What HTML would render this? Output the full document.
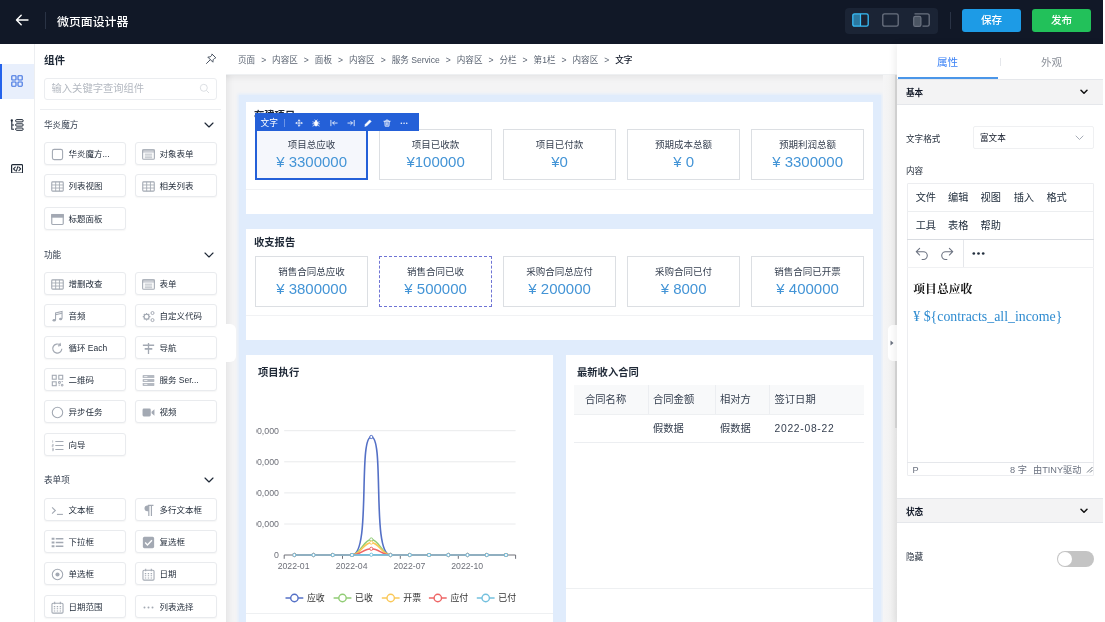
<!DOCTYPE html>
<html lang="zh-CN">
<head>
<meta charset="utf-8">
<title>微页面设计器</title>
<style>
*{box-sizing:border-box;margin:0;padding:0}
html,body{width:1105px;height:622px;overflow:hidden;background:#fff}
body{will-change:transform}
body{font-family:"Liberation Sans","Noto Sans CJK SC",sans-serif;color:#1f2937;position:relative;font-size:9.2px}
.abs{position:absolute}
/* header */
#hdr{left:0;top:0;width:1103px;height:43.5px;background:#111827}
#hdr .title{left:57px;top:1.5px;height:41px;line-height:41px;color:#fff;font-size:11.9px;font-weight:500;letter-spacing:0}
#hdr .vdiv{left:45px;top:12px;width:1px;height:17px;background:#2a3345}
.btn{top:8.5px;height:23.5px;width:59px;border-radius:3px;color:#fff;font-size:10.6px;font-weight:500;text-align:center;line-height:22.5px}
#save{left:962px;background:#1d9be6}
#pub{left:1032px;background:#22c15a}
#vgrp{left:845.2px;top:7.5px;width:93px;height:26.200px;border-radius:4px;background:#1b2435}
#hdiv2{left:949.5px;top:11.5px;width:1px;height:17.5px;background:#2a3345}
/* left bar */
#lbar{left:0;top:43.5px;width:35px;height:579px;background:#fff;border-right:1px solid #eceef1}
#lact{left:0;top:64px;width:34px;height:35px;background:#e8effc;border-left:2px solid #2563eb}
/* component panel */
#cpanel{left:35px;top:43.5px;width:191px;height:579px;background:#fff}
.ptitle{left:44px;top:52px;font-size:10.6px;font-weight:700;color:#1f2937;line-height:16px}
#search{left:44px;top:78px;width:173px;height:21.5px;border:1px solid #ebedf0;border-radius:3px;color:#b4b9c1;font-size:10.3px;line-height:19.5px;padding-left:6.5px}
.hline{height:1px;background:#eceef1}
.sec{left:44px;font-size:8.6px;color:#374151;line-height:12px}
.chev{left:204px;width:10px;height:6px}
.item{width:82px;height:23px;border:1px solid #e9ebee;border-radius:3px;background:#fff;font-size:8.5px;line-height:22.3px;color:#1f2937;padding-left:23.5px;white-space:nowrap;overflow:hidden;box-shadow:0 1px 1.5px rgba(0,0,0,.04)}
.item svg{position:absolute;left:5.5px;top:4.5px;width:13px;height:13px}
.c1{left:44px}.c2{left:135px}
/* canvas */
#bread{left:226px;top:43.5px;width:671px;height:31px;background:#fff;border-bottom:1px solid #eef0f2}
#bread .t{left:12px;top:0;line-height:32px;font-size:8.6px;color:#5b6472;white-space:nowrap}
#bread i{font-style:normal;margin:0 5.95px}
#bread b{color:#111827;font-weight:500}
#canvas{left:226px;top:74.5px;width:671px;height:548px;background:#f4f4f5;box-shadow:inset 0 7px 7px -5px rgba(0,0,0,.07),inset 7px 0 7px -5px rgba(0,0,0,.07)}
#blue{left:238.5px;top:95px;width:642.5px;height:540px;background:#e0ecfc;box-shadow:0 0 3px 1px #e0ecfc}
.card{background:#fff}
.ctitle{font-size:10.3px;font-weight:700;color:#1f2937;line-height:14px;white-space:nowrap}
.stat{width:112.6px;height:51px;border:1px solid #dcdfe3;background:#fff;text-align:center}
.stat .l{font-size:9.5px;color:#374151;line-height:13px;margin-top:7.5px}
.stat .v{font-size:15px;color:#4394d6;line-height:17px;margin-top:2.5px;white-space:pre}
.stat.sel{border:2px solid #2460d8;background:#f5f7fc}
.stat.sel .l{margin-top:6.5px}
.stat.dash{border:1px dashed #6f74d4}
.th{font-size:10.300px;color:#374151;line-height:14px;white-space:nowrap}
.td{font-size:10.300px;color:#374151;line-height:14px;white-space:nowrap}
/* right panel */
#rpanel{left:896.5px;top:43.5px;width:208.5px;height:579px;background:#fff;box-shadow:-2px 0 7px rgba(0,0,0,.07)}
#sbar{left:883px;top:75px;width:14px;height:547px;background:linear-gradient(to right,#f5f5f6 0%,#f2f2f2 55%,#ededed 100%)}
#sthumb{left:894.500px;top:75px;width:2px;height:353px;background:#d9d9d9}
.rsec{left:896.5px;width:208.5px;height:25.5px;background:#f3f3f4;border-top:1px solid #e5e7eb;border-bottom:1px solid #e5e7eb}
.rsec span{position:absolute;left:9.5px;top:0;line-height:26px;font-size:8.6px;font-weight:700;color:#111827}
.rlabel{left:906px;font-size:8.6px;color:#1f2937;line-height:12px}
.menu{font-size:10.2px;color:#222f3e;line-height:14px}
</style>
</head>
<body>
<!-- HEADER -->
<div id="hdr" class="abs">
  <svg class="abs" style="left:15px;top:14px" width="14" height="12" viewBox="0 0 14 12"><path d="M6.2 1.2 1.5 6l4.7 4.8M1.7 6H13" fill="none" stroke="#fff" stroke-width="1.4" stroke-linecap="round" stroke-linejoin="round"/></svg>
  <div class="abs vdiv"></div>
  <div class="abs title">微页面设计器</div>
  <div id="vgrp" class="abs">
    <svg class="abs" style="left:7px;top:5.8px" width="17" height="14" viewBox="0 0 17 14"><rect x="1" y="1" width="7.500" height="12" fill="#38bdf8" fill-opacity=".55"/><rect x=".8" y=".8" width="15.400" height="12.400" rx="1.800" fill="none" stroke="#38bdf8" stroke-width="1.300"/><path d="M8.500 1v12" stroke="#38bdf8" stroke-width="1.200"/></svg>
    <svg class="abs" style="left:37.300px;top:5.800px" width="17" height="14" viewBox="0 0 17 14"><rect x=".8" y=".8" width="15.400" height="12.400" rx="1.800" fill="none" stroke="#6b7280" stroke-width="1.300"/></svg>
    <svg class="abs" style="left:68px;top:5.800px" width="17" height="14" viewBox="0 0 17 14"><path d="M1.500.8h12.900a1.800 1.800 0 0 1 1.800 1.800v8.800a1.800 1.800 0 0 1-1.800 1.800H9.500" fill="none" stroke="#6b7280" stroke-width="1.300"/><rect x=".7" y="3.400" width="7.200" height="9.900" rx="1.600" fill="#4b5563" stroke="#6b7280" stroke-width="1.200"/></svg>
  </div>
  <div id="hdiv2" class="abs"></div>
  <div id="save" class="abs btn">保存</div>
  <div id="pub" class="abs btn">发布</div>
</div>

<!-- LEFT BAR -->
<div id="lbar" class="abs"></div>
<div id="lact" class="abs"></div>
<svg class="abs" style="left:11px;top:75px" width="12" height="12" viewBox="0 0 12 12" fill="none" stroke="#3b6fe0" stroke-width="1.1"><rect x=".8" y=".8" width="4.2" height="4.2" rx=".6"/><rect x="7" y=".8" width="4.2" height="4.2" rx=".6"/><rect x=".8" y="7" width="4.2" height="4.2" rx=".6"/><rect x="7" y="7" width="4.2" height="4.2" rx=".6"/></svg>
<svg class="abs" style="left:10px;top:119px" width="14" height="12" viewBox="0 0 14 12" fill="none" stroke="#1f2937" stroke-width="1"><circle cx="1.800" cy="1.500" r="1.150" fill="#1f2937" stroke="none"/><path d="M1.800 2v8.300h2.200M1.800 6h2.200" stroke-width="1.100"/><rect x="5.600" y=".6" width="7.600" height="2.300" rx="1.150"/><rect x="5.600" y="4.800" width="7.600" height="2.300" rx="1.150"/><rect x="5.600" y="9" width="7.600" height="2.300" rx="1.150"/></svg>
<svg class="abs" style="left:10.800px;top:163.700px" width="12.200" height="9.800" viewBox="0 0 12.200 9.800" fill="none" stroke="#1f2937" stroke-width="1.200" stroke-linejoin="round" stroke-linecap="round"><rect x=".6" y=".6" width="11" height="8.600" rx="1"/><path d="M4.300 3.100 2.500 4.900l1.800 1.800M7.900 3.100 9.700 4.900 7.900 6.700M6.800 2.700 5.400 7.100" stroke-width="1.050"/></svg>

<!-- COMPONENT PANEL -->
<div id="cpanel" class="abs"></div>
<div class="abs ptitle">组件</div>
<svg class="abs" style="left:205px;top:53px" width="12" height="12" viewBox="0 0 12 12" fill="none" stroke="#4b5563" stroke-width="1" stroke-linejoin="round" stroke-linecap="round"><path d="M7.200 1.200 10.800 4.800 9.600 5.300 8.100 6.800 7.900 9.200 2.800 4.100 5.200 3.900 6.700 2.400ZM5.200 6.800 1.500 10.500"/></svg>
<div id="search" class="abs">输入关键字查询组件</div>
<svg class="abs" style="left:199px;top:83px" width="11" height="11" viewBox="0 0 11 11" fill="none" stroke="#d8dbe0" stroke-width=".9"><circle cx="4.800" cy="4.800" r="3.500"/><path d="M7.500 7.500 10 10"/></svg>
<div class="abs hline" style="left:40px;top:109px;width:181px"></div>

<div class="abs sec" style="top:119px">华炎魔方</div>
<svg class="abs chev" style="top:122px" viewBox="0 0 10 6"><path d="M1 1l4 4 4-4" fill="none" stroke="#1f2937" stroke-width="1.150" stroke-linecap="round" stroke-linejoin="round"/></svg>
<div class="abs item c1" style="top:142px"><svg viewBox="0 0 12 12" fill="none" stroke="#a3a9b3" stroke-width="1" ><rect x="1.3" y="1.3" width="9.4" height="9.4" rx="1.6"/></svg>华炎魔方...</div>
<div class="abs item c2" style="top:142px"><svg viewBox="0 0 12 12" fill="none" stroke="#a3a9b3" stroke-width="1" ><rect x=".6" y="1.6" width="10.8" height="8.8" rx="1"/><rect x=".6" y="1.6" width="10.8" height="2.2" fill="#a3a9b3" opacity=".55"/><path d="M2.600 5.700h6.800M2.600 7.400h6.800M2.600 9h6.800" stroke-width=".7"/></svg>对象表单</div>
<div class="abs item c1" style="top:174px"><svg viewBox="0 0 12 12" fill="none" stroke="#a3a9b3" stroke-width="1" ><rect x=".7" y="1.700" width="10.6" height="8.600" rx=".8"/><path d="M.7 4.600h10.600M.7 7.400h10.600M4.300 1.700v8.600M7.800 1.700v8.600" stroke-width=".8"/></svg>列表视图</div>
<div class="abs item c2" style="top:174px"><svg viewBox="0 0 12 12" fill="none" stroke="#a3a9b3" stroke-width="1" ><rect x=".7" y="1.700" width="10.6" height="8.600" rx=".8"/><path d="M.7 4.600h10.600M.7 7.400h10.600M4.300 1.700v8.600M7.800 1.700v8.600" stroke-width=".8"/></svg>相关列表</div>
<div class="abs item c1" style="top:207px"><svg viewBox="0 0 12 12" fill="none" stroke="#a3a9b3" stroke-width="1" ><rect x=".7" y="1.400" width="10.600" height="9.200" rx=".8" stroke-width="1.100"/><rect x=".7" y="1.400" width="10.600" height="2.400" fill="#a3a9b3"/></svg>标题面板</div>
<div class="abs sec" style="top:248.5px">功能</div>
<svg class="abs chev" style="top:251.5px" viewBox="0 0 10 6"><path d="M1 1l4 4 4-4" fill="none" stroke="#1f2937" stroke-width="1.150" stroke-linecap="round" stroke-linejoin="round"/></svg>
<div class="abs item c1" style="top:272px"><svg viewBox="0 0 12 12" fill="none" stroke="#a3a9b3" stroke-width="1" ><rect x=".7" y="1.700" width="10.6" height="8.600" rx=".8"/><path d="M.7 4.600h10.600M.7 7.400h10.600M4.300 1.700v8.600M7.800 1.700v8.600" stroke-width=".8"/></svg>增删改查</div>
<div class="abs item c2" style="top:272px"><svg viewBox="0 0 12 12" fill="none" stroke="#a3a9b3" stroke-width="1" ><rect x=".6" y="1.6" width="10.8" height="8.8" rx="1"/><rect x=".6" y="1.6" width="10.8" height="2.2" fill="#a3a9b3" opacity=".55"/><path d="M2.600 5.700h6.800M2.600 7.400h6.800M2.600 9h6.800" stroke-width=".7"/></svg>表单</div>
<div class="abs item c1" style="top:304px"><svg viewBox="0 0 12 12" fill="none" stroke="#a3a9b3" stroke-width="1" ><path d="M4.200 9.300V2.700l6-1.300v6.700" stroke-width="1"/><path d="M4.200 4.300l6-1.300" stroke-width="1"/><ellipse cx="2.900" cy="9.500" rx="1.500" ry="1.100" fill="#a3a9b3" stroke="none"/><ellipse cx="8.900" cy="8.300" rx="1.500" ry="1.100" fill="#a3a9b3" stroke="none"/></svg>音频</div>
<div class="abs item c2" style="top:304px"><svg viewBox="0 0 12 12" fill="none" stroke="#a3a9b3" stroke-width="1" ><circle cx="4.200" cy="6.200" r="2.300" stroke-width="1.100"/><path d="M4.200 2.700v1.200M4.200 8.500v1.200M.7 6.200h1.200M6.500 6.200h1.200M1.700 3.700l.9.900M5.800 7.800l.9.900M6.700 3.700l-.9.900M2.600 7.800l-.9.900" stroke-width="1.100"/><circle cx="9.700" cy="2.800" r="1.400" stroke-width=".9"/><circle cx="9.700" cy="9.300" r="1.400" stroke-width=".9"/></svg>自定义代码</div>
<div class="abs item c1" style="top:336px"><svg viewBox="0 0 12 12" fill="none" stroke="#a3a9b3" stroke-width="1" ><path d="M10 6.200A4.200 4.200 0 1 1 8.600 2.900" stroke-width="1.100"/><path d="M8.300.8l.5 2.400-2.400.4" stroke-width="1" stroke-linejoin="round"/></svg>循环 Each</div>
<div class="abs item c2" style="top:336px"><svg viewBox="0 0 12 12" fill="none" stroke="#a3a9b3" stroke-width="1" ><path d="M6 1v10" stroke-width="1.200"/><path d="M.8 3h10.400M2.500 6.400h7" stroke-width="1.500"/></svg>导航</div>
<div class="abs item c1" style="top:368px"><svg viewBox="0 0 12 12" fill="none" stroke="#a3a9b3" stroke-width="1" ><rect x="1.200" y="1.200" width="3.600" height="3.600"/><rect x="7.200" y="1.200" width="3.600" height="3.600"/><rect x="1.200" y="7.200" width="3.600" height="3.600"/><path d="M7 7h1.600v1.600H7zM9.600 9.600h1.400v1.400H9.600zM9.800 7h1.200M7 10.300h1.200" stroke-width=".9"/></svg>二维码</div>
<div class="abs item c2" style="top:368px"><svg viewBox="0 0 12 12" fill="none" stroke="#a3a9b3" stroke-width="1" ><rect x=".6" y="1" width="10.800" height="2.800" rx=".6" fill="#a3a9b3" opacity=".8" stroke="none"/><rect x=".6" y="4.600" width="10.800" height="2.800" rx=".6" fill="#a3a9b3" opacity=".8" stroke="none"/><rect x=".6" y="8.200" width="10.800" height="2.800" rx=".6" fill="#a3a9b3" opacity=".8" stroke="none"/><path d="M2 2.400h3M2 6h3M2 9.600h3" stroke="#fff" stroke-width=".7"/></svg>服务 Ser...</div>
<div class="abs item c1" style="top:400px"><svg viewBox="0 0 12 12" fill="none" stroke="#a3a9b3" stroke-width="1" ><circle cx="6" cy="6" r="4.800"/></svg>异步任务</div>
<div class="abs item c2" style="top:400px"><svg viewBox="0 0 12 12" fill="none" stroke="#a3a9b3" stroke-width="1" ><rect x=".5" y="2.400" width="7.600" height="7.200" rx="1.200" fill="#a3a9b3" stroke="none"/><path d="M8.800 5.200 11.500 3v6L8.800 6.800z" fill="#a3a9b3" stroke="none"/></svg>视频</div>
<div class="abs item c1" style="top:433px"><svg viewBox="0 0 12 12" fill="none" stroke="#a3a9b3" stroke-width="1" ><path d="M4 2.300h7.500M4 6h7.500M4 9.700h7.500" stroke-width="1"/><path d="M1.500 1.200v2.200M1 5h1.200v1H1v1h1.200M1 8.600h1.200v2.200H1M1 9.700h1.200" stroke-width=".6"/></svg>向导</div>
<div class="abs sec" style="top:474px">表单项</div>
<svg class="abs chev" style="top:477px" viewBox="0 0 10 6"><path d="M1 1l4 4 4-4" fill="none" stroke="#1f2937" stroke-width="1.150" stroke-linecap="round" stroke-linejoin="round"/></svg>
<div class="abs item c1" style="top:498px"><svg viewBox="0 0 12 12" fill="none" stroke="#a3a9b3" stroke-width="1" ><path d="M1 3.200 4 6 1 8.800" stroke-width="1" /><path d="M5.500 9.600h5.500" stroke-width="1"/></svg>文本框</div>
<div class="abs item c2" style="top:498px"><svg viewBox="0 0 12 12" fill="none" stroke="#a3a9b3" stroke-width="1" ><path d="M5.400 1.300h5.200M6.300 1.300v9.700M8.700 1.300v9.700" stroke-width="1.100"/><path d="M6.300 1.300H5a2.700 2.700 0 0 0 0 5.400h1.300z" fill="#a3a9b3" stroke="none"/></svg>多行文本框</div>
<div class="abs item c1" style="top:530px"><svg viewBox="0 0 12 12" fill="none" stroke="#a3a9b3" stroke-width="1" ><path d="M4.400 2.500h7M4.400 6h7M4.400 9.500h7" stroke-width="1.500"/><path d="M.6 2.500h2.600M.6 6h2.600M.6 9.500h2.600" stroke-width="1.900"/></svg>下拉框</div>
<div class="abs item c2" style="top:530px"><svg viewBox="0 0 12 12" fill="none" stroke="#a3a9b3" stroke-width="1" ><rect x=".8" y=".8" width="10.400" height="10.400" rx="1.400" fill="#a3a9b3" stroke="none"/><path d="M2.900 6.100l2.100 2.100 4.200-4.300" stroke="#fff" stroke-width="1.300"/></svg>复选框</div>
<div class="abs item c1" style="top:562px"><svg viewBox="0 0 12 12" fill="none" stroke="#a3a9b3" stroke-width="1" ><circle cx="6" cy="6" r="4.800"/><circle cx="6" cy="6" r="1.900" fill="#a3a9b3" stroke="none"/></svg>单选框</div>
<div class="abs item c2" style="top:562px"><svg viewBox="0 0 12 12" fill="none" stroke="#a3a9b3" stroke-width="1" ><rect x=".9" y="2" width="10.200" height="9.200" rx="1"/><path d="M3.400.7v2.200M8.600.7v2.200" stroke-width="1"/><path d="M2.600 5.200h1.300M5.300 5.200h1.300M8 5.200h1.300M2.600 7.200h1.300M5.300 7.200h1.300M8 7.200h1.300M2.600 9.200h1.300M5.300 9.200h1.300M8 9.200h1.300" stroke-width="1"/></svg>日期</div>
<div class="abs item c1" style="top:595px"><svg viewBox="0 0 12 12" fill="none" stroke="#a3a9b3" stroke-width="1" ><rect x=".9" y="2" width="10.200" height="9.200" rx="1"/><path d="M3.400.7v2.200M8.600.7v2.200" stroke-width="1"/><path d="M2.600 5.200h1.300M5.300 5.200h1.300M8 5.200h1.300M2.600 7.200h1.300M5.300 7.200h1.300M8 7.200h1.300M2.600 9.200h1.300M5.300 9.200h1.300M8 9.200h1.300" stroke-width="1"/></svg>日期范围</div>
<div class="abs item c2" style="top:595px"><svg viewBox="0 0 12 12" fill="none" stroke="#a3a9b3" stroke-width="1" ><circle cx="2.300" cy="6" r=".9" fill="#a3a9b3" stroke="none"/><circle cx="6" cy="6" r=".9" fill="#a3a9b3" stroke="none"/><circle cx="9.700" cy="6" r=".9" fill="#a3a9b3" stroke="none"/></svg>列表选择</div>

<!-- CANVAS -->
<div id="bread" class="abs"><div class="abs t">页面<i>&gt;</i>内容区<i>&gt;</i>面板<i>&gt;</i>内容区<i>&gt;</i>服务 Service<i>&gt;</i>内容区<i>&gt;</i>分栏<i>&gt;</i>第1栏<i>&gt;</i>内容区<i>&gt;</i><b>文字</b></div></div>
<div id="canvas" class="abs"></div>
<div id="blue" class="abs"></div>
<div id="sbar" class="abs"></div><div id="sthumb" class="abs"></div>
<div class="abs card" style="left:246px;top:101.5px;width:626.5px;height:112.5px"></div>
<div class="abs ctitle" style="left:254px;top:108.6px">在建项目</div>
<div class="abs hline" style="left:246px;top:188.5px;width:626.5px;background:#f1f2f4"></div>
<div class="abs stat sel" style="left:255.3px;top:129px"><div class="l">项目总应收</div><div class="v">¥ 3300000</div></div>
<div class="abs stat" style="left:379.3px;top:129px"><div class="l">项目已收款</div><div class="v">¥100000</div></div>
<div class="abs stat" style="left:503.3px;top:129px"><div class="l">项目已付款</div><div class="v">¥0</div></div>
<div class="abs stat" style="left:627.3px;top:129px"><div class="l">预期成本总额</div><div class="v">¥ 0</div></div>
<div class="abs stat" style="left:751.3px;top:129px"><div class="l">预期利润总额</div><div class="v">¥ 3300000</div></div>
<div class="abs" id="tb" style="left:255.3px;top:113px;width:163.3px;height:17.5px;background:#2460d8"></div>
<div class="abs" style="left:260.5px;top:114.7px;line-height:16.5px;font-size:8.7px;color:#fff">文字</div>
<div class="abs" style="left:284.3px;top:118.5px;width:1px;height:8.5px;background:#6d95e6"></div>
<svg class="abs" style="left:295.3px;top:119.0px" width="8.1" height="8.1" viewBox="0 0 9 9" fill="none" stroke="#fff" stroke-width="1" stroke-linecap="round" stroke-linejoin="round"><path d="M4.500 1v7M1 4.500h7M3.500 2l1-1 1 1M3.500 7l1 1 1-1M2 3.500l-1 1 1 1M7 3.500l1 1-1 1" stroke-width=".8"/></svg>
<svg class="abs" style="left:312.2px;top:119.0px" width="8.1" height="8.1" viewBox="0 0 9 9" fill="none" stroke="#fff" stroke-width="1" stroke-linecap="round" stroke-linejoin="round"><rect x="3.100" y="2.300" width="2.800" height="5.400" rx="1.400" fill="#fff"/><path d="M3.300 1l.7 1M5.700 1 5 2M1 3.200l1.800.8M8 3.200 6.200 4M.8 5.300h2M8.200 5.300h-2M1 7.800l1.800-1M8 7.800l-1.800-1" stroke-width=".8"/></svg>
<svg class="abs" style="left:329.8px;top:119.0px" width="8.1" height="8.1" viewBox="0 0 9 9" fill="none" stroke="#fff" stroke-width="1" stroke-linecap="round" stroke-linejoin="round"><path d="M1 1.500v6M8 4.500H3M4.800 2.700 3 4.500l1.800 1.800" stroke-width=".9"/></svg>
<svg class="abs" style="left:347.2px;top:119.0px" width="8.1" height="8.1" viewBox="0 0 9 9" fill="none" stroke="#fff" stroke-width="1" stroke-linecap="round" stroke-linejoin="round"><path d="M8 1.500v6M1 4.500h5M4.200 2.700 6 4.500 4.200 6.300" stroke-width=".9"/></svg>
<svg class="abs" style="left:364.3px;top:119.0px" width="8.1" height="8.1" viewBox="0 0 9 9" fill="none" stroke="#fff" stroke-width="1" stroke-linecap="round" stroke-linejoin="round"><path d="M1 8l.5-2.200L6.300 1 8 2.700 3.200 7.500z" fill="#fff" stroke-width=".6"/></svg>
<svg class="abs" style="left:382.8px;top:119.0px" width="8.1" height="8.1" viewBox="0 0 9 9" fill="none" stroke="#fff" stroke-width="1" stroke-linecap="round" stroke-linejoin="round"><path d="M1 2.500h7M3.300 2.300V1.200h2.400v1.100M2 2.800l.4 5.200h4.200L7 2.800M3.700 4v2.800M5.300 4v2.800" stroke-width=".9"/></svg>
<svg class="abs" style="left:400.2px;top:119.0px" width="8.1" height="8.1" viewBox="0 0 9 9" fill="none" stroke="#fff" stroke-width="1" stroke-linecap="round" stroke-linejoin="round"><circle cx="1.500" cy="4.800" r=".85" fill="#fff" stroke="none"/><circle cx="4.500" cy="4.800" r=".85" fill="#fff" stroke="none"/><circle cx="7.500" cy="4.800" r=".85" fill="#fff" stroke="none"/></svg>
<div class="abs card" style="left:246px;top:229px;width:626.5px;height:111px"></div>
<div class="abs ctitle" style="left:254px;top:235.8px">收支报告</div>
<div class="abs hline" style="left:246px;top:315px;width:626.5px;background:#f1f2f4"></div>
<div class="abs stat" style="left:255.3px;top:256px"><div class="l">销售合同总应收</div><div class="v">¥ 3800000</div></div>
<div class="abs stat dash" style="left:379.3px;top:256px"><div class="l">销售合同已收</div><div class="v">¥ 500000</div></div>
<div class="abs stat" style="left:503.3px;top:256px"><div class="l">采购合同总应付</div><div class="v">¥ 200000</div></div>
<div class="abs stat" style="left:627.3px;top:256px"><div class="l">采购合同已付</div><div class="v">¥ 8000</div></div>
<div class="abs stat" style="left:751.3px;top:256px"><div class="l">销售合同已开票</div><div class="v">¥ 400000</div></div>
<div class="abs card" style="left:246px;top:355px;width:307px;height:280px"></div>
<div class="abs ctitle" style="left:258px;top:366px">项目执行</div>
<div class="abs hline" style="left:246px;top:613px;width:307px;background:#eef0f2"></div>
<svg class="abs" style="left:256px;top:400px;overflow:hidden" width="297" height="212" viewBox="256 400 297 212" font-family="Liberation Sans, Noto Sans CJK SC, sans-serif"><path d="M284.200 430.7H515.600" stroke="#e9eaec" stroke-width="1"/><path d="M284.200 461.8H515.600" stroke="#e9eaec" stroke-width="1"/><path d="M284.200 492.9H515.600" stroke="#e9eaec" stroke-width="1"/><path d="M284.200 524.0H515.600" stroke="#e9eaec" stroke-width="1"/><text x="279" y="433.8" text-anchor="end" font-size="8.8" fill="#6e7079">4,000,000</text><text x="279" y="464.9" text-anchor="end" font-size="8.8" fill="#6e7079">3,000,000</text><text x="279" y="496.0" text-anchor="end" font-size="8.8" fill="#6e7079">2,000,000</text><text x="279" y="527.1" text-anchor="end" font-size="8.8" fill="#6e7079">1,000,000</text><text x="279" y="558.1" text-anchor="end" font-size="8.8" fill="#6e7079">0</text><path d="M284.200 555H515.600" stroke="#6e7079" stroke-width="1"/><path d="M284.2 555v3.800" stroke="#6e7079" stroke-width="1"/><path d="M342.5 555v3.800" stroke="#6e7079" stroke-width="1"/><path d="M400.3 555v3.800" stroke="#6e7079" stroke-width="1"/><path d="M458.3 555v3.800" stroke="#6e7079" stroke-width="1"/><path d="M515.6 555v3.800" stroke="#6e7079" stroke-width="1"/><text x="293.6" y="568.7" text-anchor="middle" font-size="8.700" fill="#6e7079">2022-01</text><text x="351.6" y="568.7" text-anchor="middle" font-size="8.700" fill="#6e7079">2022-04</text><text x="409.4" y="568.7" text-anchor="middle" font-size="8.700" fill="#6e7079">2022-07</text><text x="467.2" y="568.7" text-anchor="middle" font-size="8.700" fill="#6e7079">2022-10</text><path d="M294.3 555H352.0C371.3 555 357.8 437.0 371.3 437.0C384.8 437.0 371.3 555 390.5 555H506.0" fill="none" stroke="#5470c6" stroke-width="1.600" stroke-linejoin="round"/><circle cx="294.3" cy="555" r="1.600" fill="#fff" stroke="#5470c6" stroke-width="1"/><circle cx="313.5" cy="555" r="1.600" fill="#fff" stroke="#5470c6" stroke-width="1"/><circle cx="332.8" cy="555" r="1.600" fill="#fff" stroke="#5470c6" stroke-width="1"/><circle cx="352.0" cy="555" r="1.600" fill="#fff" stroke="#5470c6" stroke-width="1"/><circle cx="371.3" cy="437.0" r="1.600" fill="#fff" stroke="#5470c6" stroke-width="1"/><circle cx="390.5" cy="555" r="1.600" fill="#fff" stroke="#5470c6" stroke-width="1"/><circle cx="409.8" cy="555" r="1.600" fill="#fff" stroke="#5470c6" stroke-width="1"/><circle cx="429.0" cy="555" r="1.600" fill="#fff" stroke="#5470c6" stroke-width="1"/><circle cx="448.3" cy="555" r="1.600" fill="#fff" stroke="#5470c6" stroke-width="1"/><circle cx="467.5" cy="555" r="1.600" fill="#fff" stroke="#5470c6" stroke-width="1"/><circle cx="486.8" cy="555" r="1.600" fill="#fff" stroke="#5470c6" stroke-width="1"/><circle cx="506.0" cy="555" r="1.600" fill="#fff" stroke="#5470c6" stroke-width="1"/><path d="M294.3 555H352.0C360.1 555 363.6 539.5 371.3 539.5C379.0 539.5 382.4 555 390.5 555H506.0" fill="none" stroke="#91cc75" stroke-width="1.600" stroke-linejoin="round"/><circle cx="294.3" cy="555" r="1.600" fill="#fff" stroke="#91cc75" stroke-width="1"/><circle cx="313.5" cy="555" r="1.600" fill="#fff" stroke="#91cc75" stroke-width="1"/><circle cx="332.8" cy="555" r="1.600" fill="#fff" stroke="#91cc75" stroke-width="1"/><circle cx="352.0" cy="555" r="1.600" fill="#fff" stroke="#91cc75" stroke-width="1"/><circle cx="371.3" cy="539.5" r="1.600" fill="#fff" stroke="#91cc75" stroke-width="1"/><circle cx="390.5" cy="555" r="1.600" fill="#fff" stroke="#91cc75" stroke-width="1"/><circle cx="409.8" cy="555" r="1.600" fill="#fff" stroke="#91cc75" stroke-width="1"/><circle cx="429.0" cy="555" r="1.600" fill="#fff" stroke="#91cc75" stroke-width="1"/><circle cx="448.3" cy="555" r="1.600" fill="#fff" stroke="#91cc75" stroke-width="1"/><circle cx="467.5" cy="555" r="1.600" fill="#fff" stroke="#91cc75" stroke-width="1"/><circle cx="486.8" cy="555" r="1.600" fill="#fff" stroke="#91cc75" stroke-width="1"/><circle cx="506.0" cy="555" r="1.600" fill="#fff" stroke="#91cc75" stroke-width="1"/><path d="M294.3 555H352.0C360.1 555 363.6 542.6 371.3 542.6C379.0 542.6 382.4 555 390.5 555H506.0" fill="none" stroke="#fac858" stroke-width="1.600" stroke-linejoin="round"/><circle cx="294.3" cy="555" r="1.600" fill="#fff" stroke="#fac858" stroke-width="1"/><circle cx="313.5" cy="555" r="1.600" fill="#fff" stroke="#fac858" stroke-width="1"/><circle cx="332.8" cy="555" r="1.600" fill="#fff" stroke="#fac858" stroke-width="1"/><circle cx="352.0" cy="555" r="1.600" fill="#fff" stroke="#fac858" stroke-width="1"/><circle cx="371.3" cy="542.6" r="1.600" fill="#fff" stroke="#fac858" stroke-width="1"/><circle cx="390.5" cy="555" r="1.600" fill="#fff" stroke="#fac858" stroke-width="1"/><circle cx="409.8" cy="555" r="1.600" fill="#fff" stroke="#fac858" stroke-width="1"/><circle cx="429.0" cy="555" r="1.600" fill="#fff" stroke="#fac858" stroke-width="1"/><circle cx="448.3" cy="555" r="1.600" fill="#fff" stroke="#fac858" stroke-width="1"/><circle cx="467.5" cy="555" r="1.600" fill="#fff" stroke="#fac858" stroke-width="1"/><circle cx="486.8" cy="555" r="1.600" fill="#fff" stroke="#fac858" stroke-width="1"/><circle cx="506.0" cy="555" r="1.600" fill="#fff" stroke="#fac858" stroke-width="1"/><path d="M294.3 555H352.0C360.1 555 363.6 548.8 371.3 548.8C379.0 548.8 382.4 555 390.5 555H506.0" fill="none" stroke="#ee6666" stroke-width="1.600" stroke-linejoin="round"/><circle cx="294.3" cy="555" r="1.600" fill="#fff" stroke="#ee6666" stroke-width="1"/><circle cx="313.5" cy="555" r="1.600" fill="#fff" stroke="#ee6666" stroke-width="1"/><circle cx="332.8" cy="555" r="1.600" fill="#fff" stroke="#ee6666" stroke-width="1"/><circle cx="352.0" cy="555" r="1.600" fill="#fff" stroke="#ee6666" stroke-width="1"/><circle cx="371.3" cy="548.8" r="1.600" fill="#fff" stroke="#ee6666" stroke-width="1"/><circle cx="390.5" cy="555" r="1.600" fill="#fff" stroke="#ee6666" stroke-width="1"/><circle cx="409.8" cy="555" r="1.600" fill="#fff" stroke="#ee6666" stroke-width="1"/><circle cx="429.0" cy="555" r="1.600" fill="#fff" stroke="#ee6666" stroke-width="1"/><circle cx="448.3" cy="555" r="1.600" fill="#fff" stroke="#ee6666" stroke-width="1"/><circle cx="467.5" cy="555" r="1.600" fill="#fff" stroke="#ee6666" stroke-width="1"/><circle cx="486.8" cy="555" r="1.600" fill="#fff" stroke="#ee6666" stroke-width="1"/><circle cx="506.0" cy="555" r="1.600" fill="#fff" stroke="#ee6666" stroke-width="1"/><path d="M294.3 555H352.0C360.1 555 363.6 554.75 371.3 554.75C379.0 554.75 382.4 555 390.5 555H506.0" fill="none" stroke="#73c0de" stroke-width="1.600" stroke-linejoin="round"/><circle cx="294.3" cy="555" r="1.600" fill="#fff" stroke="#73c0de" stroke-width="1"/><circle cx="313.5" cy="555" r="1.600" fill="#fff" stroke="#73c0de" stroke-width="1"/><circle cx="332.8" cy="555" r="1.600" fill="#fff" stroke="#73c0de" stroke-width="1"/><circle cx="352.0" cy="555" r="1.600" fill="#fff" stroke="#73c0de" stroke-width="1"/><circle cx="371.3" cy="554.75" r="1.600" fill="#fff" stroke="#73c0de" stroke-width="1"/><circle cx="390.5" cy="555" r="1.600" fill="#fff" stroke="#73c0de" stroke-width="1"/><circle cx="409.8" cy="555" r="1.600" fill="#fff" stroke="#73c0de" stroke-width="1"/><circle cx="429.0" cy="555" r="1.600" fill="#fff" stroke="#73c0de" stroke-width="1"/><circle cx="448.3" cy="555" r="1.600" fill="#fff" stroke="#73c0de" stroke-width="1"/><circle cx="467.5" cy="555" r="1.600" fill="#fff" stroke="#73c0de" stroke-width="1"/><circle cx="486.8" cy="555" r="1.600" fill="#fff" stroke="#73c0de" stroke-width="1"/><circle cx="506.0" cy="555" r="1.600" fill="#fff" stroke="#73c0de" stroke-width="1"/><path d="M285.5 598h17.800" stroke="#5470c6" stroke-width="1.500"/><circle cx="294.4" cy="598" r="3.700" fill="#fff" stroke="#5470c6" stroke-width="1.400"/><text x="307.0" y="601.2" font-size="8.900" fill="#333">应收</text><path d="M333.6 598h17.800" stroke="#91cc75" stroke-width="1.500"/><circle cx="342.5" cy="598" r="3.700" fill="#fff" stroke="#91cc75" stroke-width="1.400"/><text x="355.1" y="601.2" font-size="8.900" fill="#333">已收</text><path d="M381.8 598h17.800" stroke="#fac858" stroke-width="1.500"/><circle cx="390.7" cy="598" r="3.700" fill="#fff" stroke="#fac858" stroke-width="1.400"/><text x="403.3" y="601.2" font-size="8.900" fill="#333">开票</text><path d="M428.9 598h17.800" stroke="#ee6666" stroke-width="1.500"/><circle cx="437.8" cy="598" r="3.700" fill="#fff" stroke="#ee6666" stroke-width="1.400"/><text x="450.4" y="601.2" font-size="8.900" fill="#333">应付</text><path d="M476.8 598h17.800" stroke="#73c0de" stroke-width="1.500"/><circle cx="485.7" cy="598" r="3.700" fill="#fff" stroke="#73c0de" stroke-width="1.400"/><text x="498.3" y="601.2" font-size="8.900" fill="#333">已付</text></svg>
<div class="abs card" style="left:566px;top:355px;width:306.5px;height:280px"></div>
<div class="abs ctitle" style="left:577px;top:366.4px;font-size:10.300px">最新收入合同</div>
<div class="abs" style="left:573.5px;top:385px;width:290px;height:29.500px;background:#f8f9fa;border-bottom:1px solid #eef0f2"></div>
<div class="abs" style="left:647.5px;top:385px;width:1px;height:29px;background:#eceef1"></div>
<div class="abs" style="left:714.5px;top:385px;width:1px;height:29px;background:#eceef1"></div>
<div class="abs" style="left:768.5px;top:385px;width:1px;height:29px;background:#eceef1"></div>
<div class="abs th" style="left:585px;top:392.8px">合同名称</div>
<div class="abs th" style="left:653px;top:392.8px">合同金额</div>
<div class="abs th" style="left:720px;top:392.8px">相对方</div>
<div class="abs th" style="left:774.5px;top:392.8px">签订日期</div>
<div class="abs td" style="left:653px;top:422px">假数据</div>
<div class="abs td" style="left:720px;top:422px">假数据</div>
<div class="abs td" style="left:774.5px;top:422px"><span style="letter-spacing:.72px">2022-08-22</span></div>
<div class="abs hline" style="left:573.5px;top:442px;width:290px;background:#eceef1"></div>
<div class="abs hline" style="left:566px;top:588px;width:306.5px;background:#eef0f2"></div>
<div class="abs" style="left:226px;top:323.5px;width:10px;height:38.5px;background:#fff;border-radius:0 6px 6px 0"></div>
<div class="abs" style="left:888px;top:324.500px;width:9px;height:36px;background:#fff;border-radius:5px 0 0 5px"></div>
<svg class="abs" style="left:890px;top:340px" width="4" height="6" viewBox="0 0 4 6"><path d="M.5.5 3.500 3 .5 5.500z" fill="#6b7280"/></svg>

<!-- RIGHT PANEL -->
<div id="rpanel" class="abs"></div>
<div class="abs" style="left:896.5px;top:43.5px;width:102px;height:34px;text-align:center;line-height:36px;font-size:10.600px;color:#3b82f6">属性</div>
<div class="abs" style="left:1000px;top:43.5px;width:103px;height:34px;text-align:center;line-height:36px;font-size:10.600px;color:#8a8f98">外观</div>
<div class="abs" style="left:999.5px;top:58px;width:1px;height:8px;background:#e5e7eb"></div>
<div class="abs" style="left:897.5px;top:77px;width:100.500px;height:2px;background:#4b96e8"></div>
<div class="abs rsec" style="top:79px;width:206.5px"><span>基本</span></div>
<svg class="abs" style="left:1079.500px;top:89px" width="8" height="6" viewBox="0 0 8 6"><path d="M1 1.200l3 3 3-3" fill="none" stroke="#111" stroke-width="1.500" stroke-linecap="round" stroke-linejoin="round"/></svg>
<div class="abs rlabel" style="top:132.8px">文字格式</div>
<div class="abs" style="left:973px;top:126px;width:121px;height:23px;border:1px solid #eff0f2;border-radius:2px;font-size:8.600px;line-height:22.5px;padding-left:6px;color:#111827">富文本</div>
<svg class="abs" style="left:1074.500px;top:135px" width="9" height="6" viewBox="0 0 9 6"><path d="M1 1l3.500 3.500L8 1" fill="none" stroke="#9ca3af" stroke-width=".9" stroke-linecap="round" stroke-linejoin="round"/></svg>
<div class="abs rlabel" style="top:164.5px">内容</div>
<!-- editor -->
<div class="abs" style="left:906.5px;top:182.5px;width:187.500px;height:293px;border:1px solid #ecedf0;border-radius:1px"></div>
<div class="abs menu" style="left:915.7px;top:191px">文件</div>
<div class="abs menu" style="left:948px;top:191px">编辑</div>
<div class="abs menu" style="left:980.6px;top:191px">视图</div>
<div class="abs menu" style="left:1013.7px;top:191px">插入</div>
<div class="abs menu" style="left:1046.4px;top:191px">格式</div>
<div class="abs hline" style="left:907px;top:211px;width:186.500px;background:#eceef0"></div>
<div class="abs menu" style="left:915.7px;top:218.8px">工具</div>
<div class="abs menu" style="left:948px;top:218.8px">表格</div>
<div class="abs menu" style="left:980.6px;top:218.8px">帮助</div>
<div class="abs hline" style="left:907px;top:239px;width:186.500px;background:#d9dce1"></div>
<svg class="abs" style="left:914.5px;top:247px" width="14" height="13" viewBox="0 0 13 12"><path d="M4.300 1.200 1.200 4.300l3.100 3.100M1.400 4.300h6.400a3.600 3.600 0 0 1 0 7.200H6.600" fill="none" stroke="#6b7280" stroke-width="1" stroke-linecap="round" stroke-linejoin="round"/></svg>
<svg class="abs" style="left:940px;top:247px" width="14" height="13" viewBox="0 0 13 12"><path d="M8.700 1.200l3.100 3.100-3.100 3.100M11.600 4.300H5.200a3.600 3.600 0 0 0 0 7.200h1.200" fill="none" stroke="#6b7280" stroke-width="1" stroke-linecap="round" stroke-linejoin="round"/></svg>
<div class="abs" style="left:963px;top:240px;width:1px;height:27px;background:#e5e7eb"></div>
<svg class="abs" style="left:972px;top:251px" width="13" height="5" viewBox="0 0 13 5" fill="#222f3e"><circle cx="1.800" cy="2.500" r="1.350"/><circle cx="6.500" cy="2.500" r="1.350"/><circle cx="11.200" cy="2.500" r="1.350"/></svg>
<div class="abs hline" style="left:907px;top:267px;width:186.500px;background:#f0f1f3"></div>
<div class="abs" style="left:913.3px;top:281px;font-family:'Liberation Serif','Noto Serif CJK SC',serif;font-size:11.800px;line-height:16px;color:#111;font-weight:700;white-space:nowrap">项目总应收</div>
<div class="abs" id="expr" style="left:913.3px;top:308.6px;font-family:'Liberation Serif','Noto Serif CJK SC',serif;font-size:13.850px;line-height:16px;color:#2e8bd0;white-space:pre">¥ ${contracts_all_income}</div>
<div class="abs hline" style="left:907px;top:462px;width:186.500px;background:#e5e7eb"></div>
<div class="abs" style="left:912.5px;top:463.5px;font-size:9.200px;line-height:12px;color:#6b7280">P</div>
<div class="abs" style="left:1010px;top:463.5px;font-size:9.200px;line-height:12px;color:#6b7280;white-space:nowrap">8 字</div><div class="abs" style="left:1033px;top:463.5px;font-size:9.200px;line-height:12px;color:#6b7280;white-space:nowrap">由TINY驱动</div>
<svg class="abs" style="left:1086px;top:466px" width="7" height="7" viewBox="0 0 7 7"><path d="M6.500 1 1 6.500M6.500 4 4 6.500" stroke="#4b5563" stroke-width=".8" fill="none"/></svg>
<div class="abs rsec" style="top:497.5px;width:206.5px"><span>状态</span></div>
<svg class="abs" style="left:1079.500px;top:508px" width="8" height="6" viewBox="0 0 8 6"><path d="M1 1.200l3 3 3-3" fill="none" stroke="#111" stroke-width="1.500" stroke-linecap="round" stroke-linejoin="round"/></svg>
<div class="abs rlabel" style="top:551px">隐藏</div>
<div class="abs" style="left:1057.3px;top:550.5px;width:36.500px;height:16px;border-radius:8px;background:#c4c4c4"></div>
<div class="abs" style="left:1058.3px;top:551.5px;width:14px;height:14px;border-radius:7px;background:#fff"></div>

</body>
</html>
